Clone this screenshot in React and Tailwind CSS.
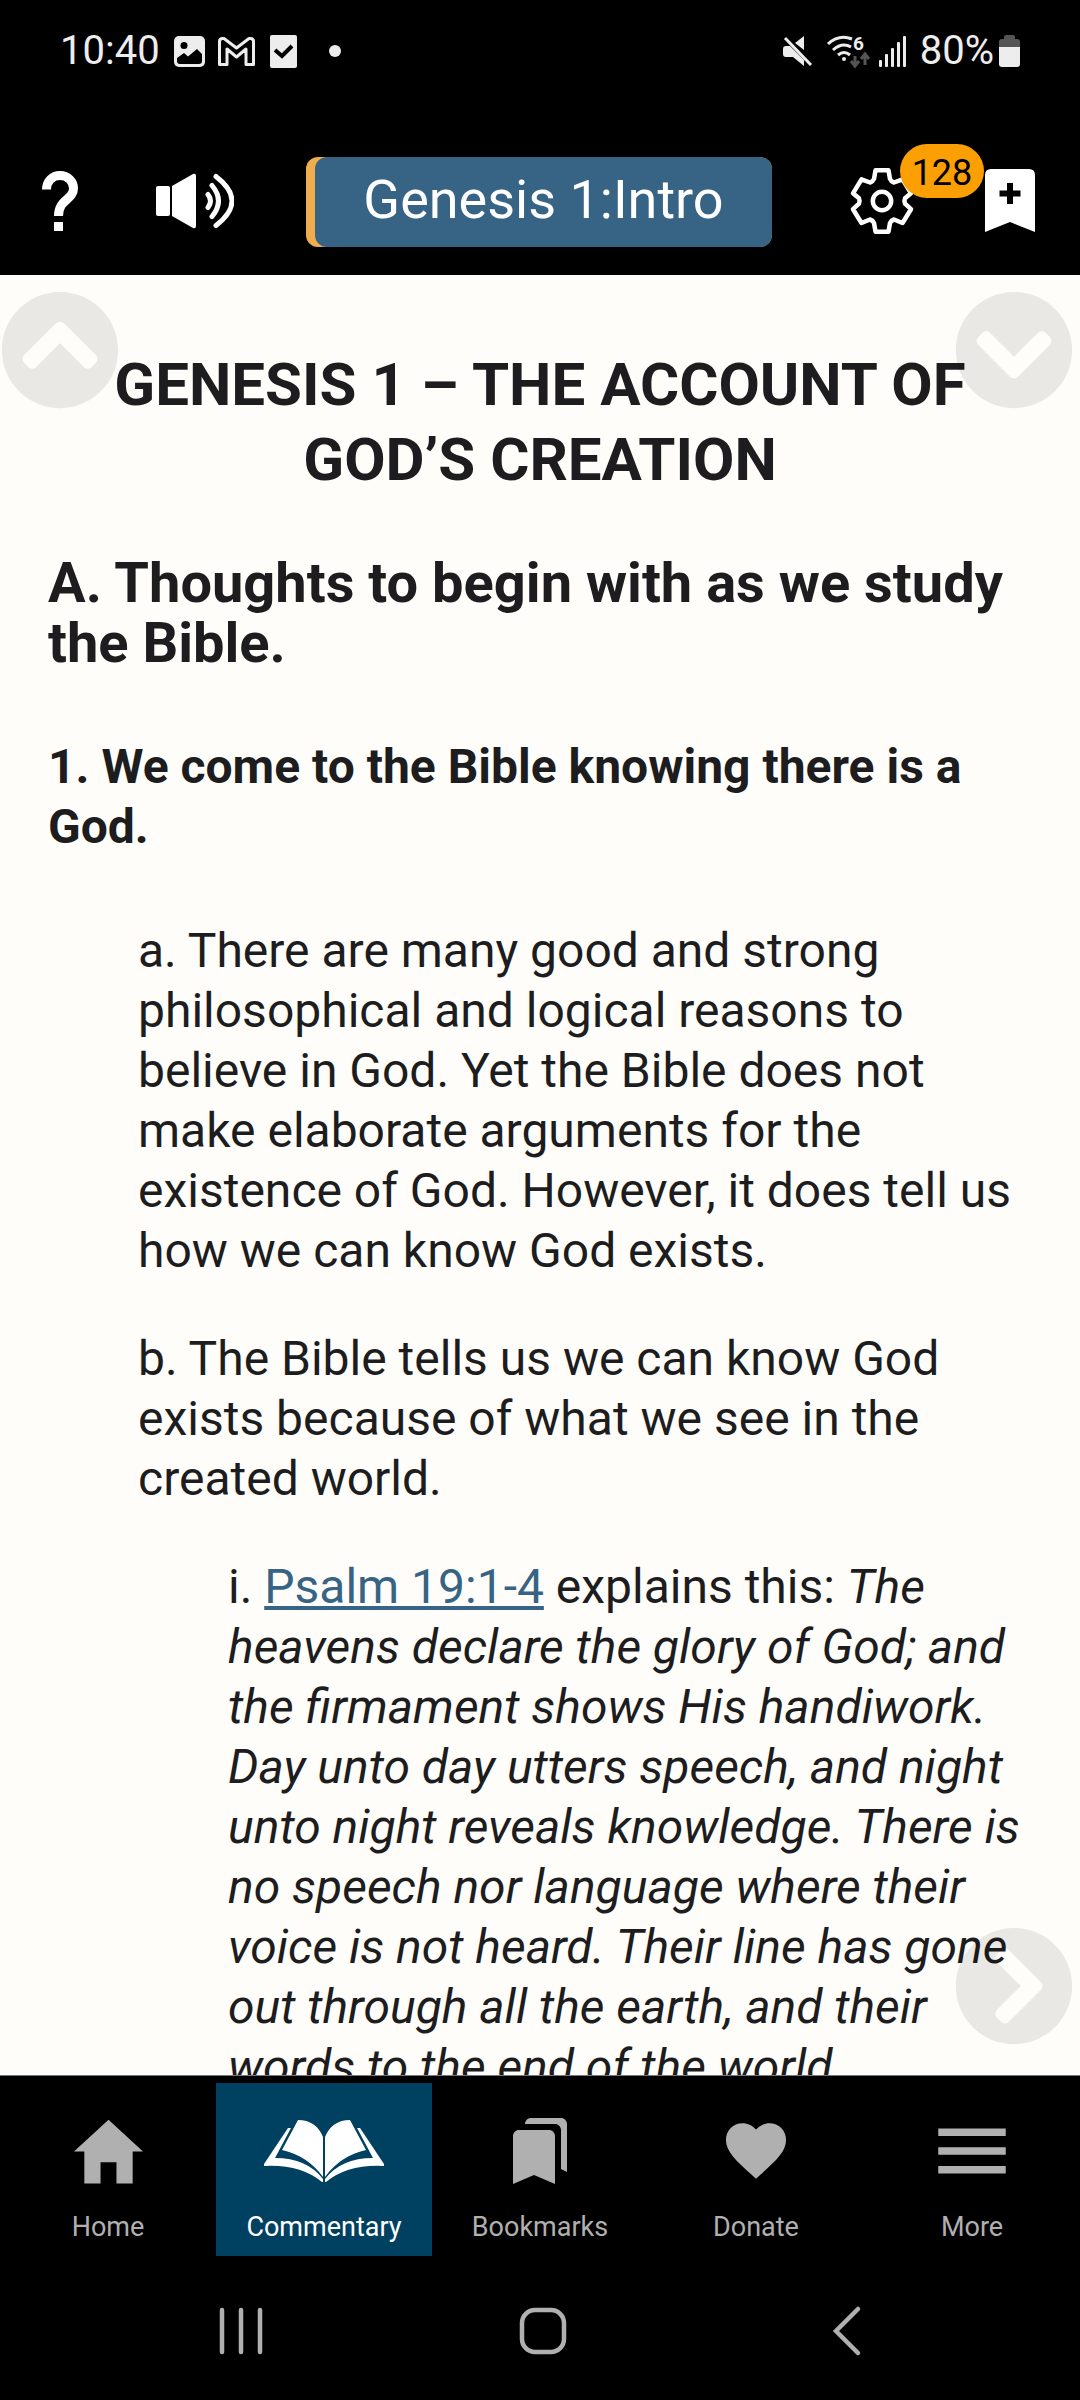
import React from 'react';
import { IoMdHome, IoMdHeart, IoMdMenu } from 'react-icons/io';
import { MdBookmarks } from 'react-icons/md';
import { FaChevronCircleUp, FaChevronCircleDown, FaChevronCircleRight } from 'react-icons/fa';

const StatusBar = () => (
    <div className="h-[102px] px-[60px] flex items-center justify-between text-[40px] leading-[48px] text-[#ededed]">
        <div className="flex items-center">
            <span>10:40</span>
            <svg className="ml-[14px]" width="31" height="31" viewBox="0 0 31 31" fill="none">
                <rect width="31" height="31" rx="5" fill="#ededed" />
                <circle cx="10" cy="9.500" r="3.500" fill="#000" />
                <path d="M3 22l7-5 4 3.500 9-7.500 5 5v7q0 3-3 3H6q-3 0-3-3z" fill="#000" />
            </svg>
            <svg className="ml-[13px]" width="37" height="29" viewBox="0 0 37 29" fill="none" stroke="#ededed" strokeWidth="3" strokeLinejoin="round">
                <path d="M1.500 4.500Q1.500 1.500 4.500 1.500H6L18.500 11 31 1.500h1.500q3 0 3 3V27.500H28V12l-9.500 8L9 12v15.500H1.500z" />
            </svg>
            <svg className="ml-[15px]" width="27" height="33" viewBox="0 0 27 33" fill="none">
                <rect width="27" height="33" rx="2" fill="#ededed" />
                <path d="M5 15l7 6L22 11" stroke="#000" strokeWidth="4" />
            </svg>
            <span className="ml-8 w-3 h-3 rounded-full bg-[#ededed]" />
        </div>
        <div className="flex items-center">
            <svg width="30" height="31" viewBox="0 0 30 31" fill="#ededed">
                <path d="M0 13q0-3 3-3h4l14 14v6L10 21H3q-3 0-3-3zM12 7l9-7v14z" />
                <path d="M2 2l26 27" stroke="#ededed" strokeWidth="3" />
            </svg>
            <svg className="ml-[14px] overflow-visible" width="44" height="33" viewBox="0 0 44 33" fill="none" stroke="#ededed" strokeWidth="3">
                <path d="M1 9Q12-1 25 4M6 15q9-8 18-3M11 20q6-5 12 0" />
                <circle cx="17" cy="24" r="2" fill="#ededed" stroke="none" />
                <text x="26" y="15" fontSize="19" fontWeight="700" fill="#ededed" stroke="none">6</text>
                <path d="M28 21v9m-4-4l4 5 4-5M38 30v-10m-4 4l4-5 4 5" stroke="#555" strokeWidth="3" />
            </svg>
            <svg className="ml-2" width="27" height="31" viewBox="0 0 27 31" fill="#ededed">
                <rect x="0" y="24" width="3" height="7" rx="1" />
                <rect x="6" y="18" width="3" height="13" rx="1" />
                <rect x="12" y="12" width="3" height="19" rx="1" />
                <rect x="18" y="6" width="3" height="25" rx="1" />
                <rect x="24" y="0" width="3" height="31" rx="1" />
            </svg>
            <span className="ml-[14px]">80%</span>
            <svg className="ml-[5px]" width="21" height="32" viewBox="0 0 21 32">
                <path d="M0 12V7q0-3 3-3h2V2q0-2 2-2h7q2 0 2 2v2h2q3 0 3 3v5z" fill="#555" />
                <path d="M0 12h21v17q0 3-3 3H3q-3 0-3-3z" fill="#ededed" />
            </svg>
        </div>
    </div>
);

const HelpIcon = () => (
    <svg width="36" height="60" viewBox="0 0 36 60" fill="none" stroke="currentColor" strokeWidth="9">
        <path d="M4.500 18.500C4.500 10 10.500 4.500 18 4.500S31.500 10 31.500 17.500C31.500 29 16.500 28 16.500 45" />
        <path d="M12 55.500h9" />
    </svg>
);

const GearIcon = () => (
    <svg width="64" height="66" viewBox="0 0 64 66" fill="none" stroke="currentColor" strokeWidth="4.500" strokeLinejoin="round">
        <path d="M25.500 2.300h13l1.500 8.700q1 2.500 4 3.500l8.500-3.200 8.500 14-6 5q-1.200 2.700 0 5.400l6 5.500-8.500 13.800L44 51.500q-3 1-4 3.500l-1.500 8.700h-13L24 55q-1-2.500-4-3.500L11.500 55 3 41.200l6-5.500q1.200-2.700 0-5.400l-6-5 8.500-14L20 14.500q3-1 4-3.500z" />
        <circle cx="32" cy="33" r="9.200" />
    </svg>
);

const Header = () => (
    <header className="h-[173px] pl-[42px] pr-[45px] pt-6 flex items-center justify-between text-white">
        <div className="flex items-center gap-[78px]">
            <button aria-label="Help"><HelpIcon /></button>
            <button aria-label="Listen">
                <svg width="78" height="56" viewBox="0 0 78 56" fill="currentColor">
                    <rect x="0" y="13" width="14" height="30" rx="2" />
                    <path d="M16 13L37 1q3-1 3 2v50q0 3-3 2L16 43z" />
                    <g fill="none" stroke="currentColor" strokeWidth="5" strokeLinecap="round">
                        <path d="M52 21.500q5 6.500 0 13M56 12.500q13 15.500 0 31M60 3.500q32 24.500 0 49" />
                    </g>
                </svg>
            </button>
        </div>
        <button className="mt-[2px] h-[90px] pl-[9px] rounded-xl bg-[#f0ad4e] flex">
            <span className="h-full px-12 rounded-xl bg-[#376485] text-[54px] leading-[86px]">Genesis 1:Intro</span>
        </button>
        <div className="flex items-center gap-[65px]">
            <button aria-label="Settings" className="relative px-[6px]">
                <GearIcon />
                <span className="absolute left-14 -top-6 h-[54px] w-[84px] rounded-full bg-[#fb9f03] text-black text-[36px] leading-[58px]">128</span>
            </button>
            <button aria-label="Add bookmark">
                <svg width="50" height="63" viewBox="0 0 50 63" fill="currentColor">
                    <path d="M6 0h38q6 0 6 6v57L25 53 0 63V6q0-6 6-6z" />
                    <path d="M25 14v21M14.500 24.500h21" stroke="#000" strokeWidth="6" />
                </svg>
            </button>
        </div>
    </header>
);

const Commentary = () => (
    <main className="relative flex-1 min-h-0 overflow-hidden bg-[#fffdf9] text-[#1d1d1f] text-[48px] leading-[60px] border-b border-[#777]">
        <button aria-label="Previous chapter" className="absolute left-0 top-[15px] opacity-[0.08] text-black"><FaChevronCircleUp size={120} /></button>
        <button aria-label="Next chapter" className="absolute right-[6px] top-[15px] opacity-[0.08] text-black"><FaChevronCircleDown size={120} /></button>
        <button aria-label="Next page" className="absolute right-[6px] bottom-[29px] opacity-[0.08] text-black"><FaChevronCircleRight size={120} /></button>

        <article className="px-12">
            <h1 className="pt-[72px] text-[60px] leading-[75px] font-bold text-center">
                GENESIS 1 – THE ACCOUNT OF GOD’S CREATION
            </h1>
            <h2 className="mt-14 text-[56px] font-bold">A. Thoughts to begin with as we study the Bible.</h2>
            <h3 className="mt-16 font-bold">1. We come to the Bible knowing there is a God.</h3>
            <div className="ml-[90px] mt-16">
                <p>
                    a. There are many good and strong philosophical and logical reasons to believe in God. Yet the Bible
                    does not make elaborate arguments for the existence of God. However, it does tell us how we can know
                    God exists.
                </p>
                <p className="mt-12">
                    b. The Bible tells us we can know God exists because of what we see in the created world.
                </p>
                <p className="ml-[90px] mt-12 -mr-5">
                    i. <a href="#psalm-19" className="text-[#376485] underline">Psalm 19:1-4</a> explains this:{' '}
                    <em>
                        The heavens declare the glory of God; and the firmament shows His handiwork. Day unto day utters
                        speech, and night unto night reveals knowledge. There is no speech nor language where their voice
                        is not heard. Their line has gone out through all the earth, and their words to the end of the
                        world.
                    </em>
                </p>
            </div>
        </article>
    </main>
);

const BookIcon = () => (
    <svg width="120" height="62" viewBox="0 0 120 62" fill="currentColor">
        <path d="M34 0q18 0 25 17v40Q44 36 18 30z" />
        <path d="M86 0Q68 0 61 17v40q15-21 41-27z" />
        <path d="M24 8h3L11 38q32 0 48 21v3h-1Q36 44 0 46v-2z" />
        <path d="M96 8h-3l16 30q-32 0-48 21v3h1q22-18 58-16v-2z" />
    </svg>
);

const tabs = [
    { label: 'Home', icon: <IoMdHome size={85} /> },
    { label: 'Commentary', icon: <BookIcon />, active: true },
    { label: 'Bookmarks', icon: <MdBookmarks size={72} /> },
    { label: 'Donate', icon: <IoMdHeart size={74} /> },
    { label: 'More', icon: <IoMdMenu size={90} /> },
];

const TabBar = () => (
    <nav className="mt-[7px] h-[173px] grid grid-cols-5">
        {tabs.map((tab) => (
            <button
                key={tab.label}
                className={`flex flex-col items-center text-[27px] leading-[36px] ${tab.active ? 'bg-[#004161] text-white' : 'text-[#b0b0b0]'}`}
            >
                <span className="mt-5 h-24 flex items-center justify-center">{tab.icon}</span>
                <span className="mt-[10px]">{tab.label}</span>
            </button>
        ))}
    </nav>
);

const SystemNav = () => (
    <div className="h-[144px] pt-[6px] pl-[217px] pr-[211px] flex items-center justify-between">
        <button aria-label="Recent apps">
            <svg width="52" height="52" viewBox="0 0 52 52" stroke="#b0b0b0" strokeWidth="4.500" strokeLinecap="round">
                <path d="M5 5v42M24 5v42M43 5v42" />
            </svg>
        </button>
        <button aria-label="Home screen">
            <svg width="52" height="52" viewBox="0 0 52 52" fill="none" stroke="#b0b0b0" strokeWidth="4.500">
                <rect x="5" y="5" width="42" height="42" rx="13" />
            </svg>
        </button>
        <button aria-label="Back">
            <svg width="52" height="52" viewBox="0 0 52 52" fill="none" stroke="#b0b0b0" strokeWidth="4.500" strokeLinecap="round">
                <path d="M41 4L19 26l22 22" />
            </svg>
        </button>
    </div>
);

const App = () => (
    <div className="h-screen flex flex-col bg-black font-['Roboto',sans-serif]">
        <StatusBar />
        <Header />
        <Commentary />
        <TabBar />
        <SystemNav />
    </div>
);

export default App;
